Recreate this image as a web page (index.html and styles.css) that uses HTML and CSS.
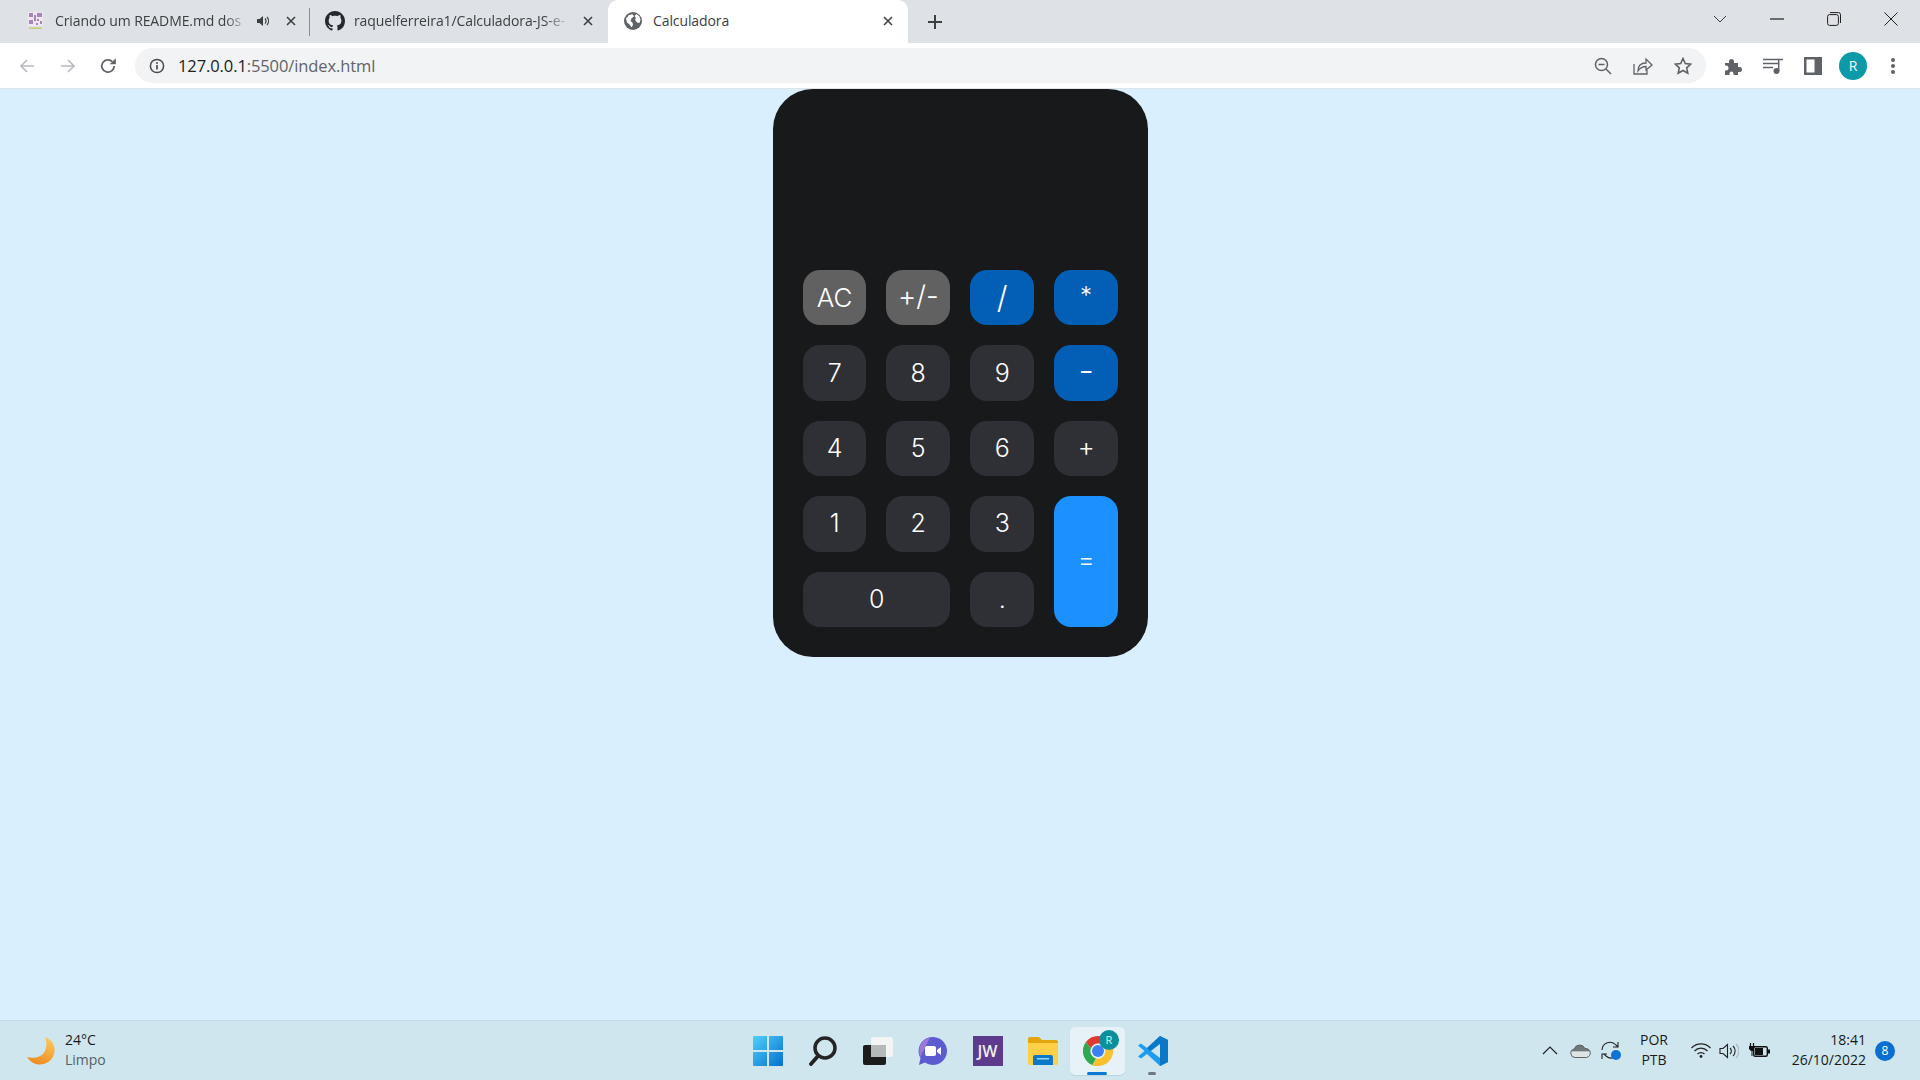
FILE: index.html
```html
<!DOCTYPE html>
<html lang="pt-BR">
<head>
<meta charset="utf-8">
<title>Calculadora</title>
<link rel="stylesheet" href="styles.css">
</head>
<body>
<div class="tabstrip">
  <div class="tab tab-one">
    <svg class="fav" width="17" height="18" viewBox="0 0 17 18"><rect x="1" y="0" width="15" height="14" fill="#efe6f0"/><path d="M2 1h4v4H2zM10 1h5v4h-5zM2 8h4v4H2zM7 3h2v6H7zM10 7h2v2h-2zM13 9h2v3h-2zM9 11h2v2H9z" fill="#a884bd"/><rect x="2" y="15.500" width="13" height="1.500" fill="#c3cf6a"/></svg>
    <span class="title fade">Criando um README.md dos</span>
    <svg class="audio" width="12" height="12" viewBox="0 0 12 12"><path d="M0 4h2.500L6 1v10L2.500 8H0z" fill="#3c4043"/><path d="M8 3.500a3.500 3.500 0 0 1 0 5M10 2a6 6 0 0 1 0 8" fill="none" stroke="#3c4043" stroke-width="1.200"/></svg>
    <svg class="close" width="10" height="10" viewBox="0 0 10 10"><path d="M1 1l8 8M9 1l-8 8" stroke="#3c4043" stroke-width="1.600"/></svg>
  </div>
  <i class="tabsep"></i>
  <div class="tab tab-two">
    <svg class="fav" width="20" height="20" viewBox="0 0 16 16"><path fill="#24292f" d="M8 0C3.58 0 0 3.58 0 8c0 3.54 2.29 6.53 5.47 7.59.4.07.55-.17.55-.38 0-.19-.01-.82-.01-1.49-2.01.37-2.53-.49-2.69-.94-.09-.23-.48-.94-.82-1.13-.28-.15-.68-.52-.01-.53.63-.01 1.08.58 1.23.82.72 1.21 1.87.87 2.33.66.07-.52.28-.87.51-1.07-1.78-.2-3.64-.89-3.64-3.95 0-.87.31-1.59.82-2.15-.08-.2-.36-1.02.08-2.12 0 0 .67-.21 2.2.82.64-.18 1.32-.27 2-.27.68 0 1.36.09 2 .27 1.53-1.04 2.2-.82 2.2-.82.44 1.1.16 1.92.08 2.12.51.56.82 1.27.82 2.15 0 3.07-1.87 3.75-3.65 3.95.29.25.54.73.54 1.48 0 1.07-.01 1.93-.01 2.2 0 .21.15.46.55.38A8.013 8.013 0 0016 8c0-4.42-3.58-8-8-8z"/></svg>
    <span class="title fade">raquelferreira1/Calculadora-JS-e-</span>
    <svg class="close" width="10" height="10" viewBox="0 0 10 10"><path d="M1 1l8 8M9 1l-8 8" stroke="#3c4043" stroke-width="1.600"/></svg>
  </div>
  <div class="tab tab-active">
    <svg class="fav" width="18" height="18" viewBox="0 0 18 18"><circle cx="9" cy="9" r="9" fill="#5f6368"/><path d="M2 6.500l3-3.500 3.500-.8 1.500 2-2.500 2.300-1 2.500 2 1.500.5 2.500-1.500 2.300-2-2.800-2.500-2zM12.500 2l3 2.500 1 3.500-1 3-2.500-.5-2-2.500 1-2-1.500-2z" fill="#fff"/></svg>
    <span class="title">Calculadora</span>
    <svg class="close" width="10" height="10" viewBox="0 0 10 10"><path d="M1 1l8 8M9 1l-8 8" stroke="#3c4043" stroke-width="1.600"/></svg>
  </div>
  <svg class="newtab" width="16" height="16" viewBox="0 0 16 16"><path d="M8 1v14M1 8h14" stroke="#3c4043" stroke-width="2"/></svg>
  <div class="winctrls">
    <svg width="14" height="8" viewBox="0 0 14 8"><path d="M1 1l6 6 6-6" fill="none" stroke="#3c4043"/></svg>
    <svg width="14" height="2" viewBox="0 0 14 2"><path d="M0 1h14" stroke="#1f1f1f" stroke-width="1.200"/></svg>
    <svg width="14" height="14" viewBox="0 0 14 14"><rect x=".6" y="2.600" width="10.800" height="10.800" rx="2" fill="none" stroke="#1f1f1f"/><path d="M3 .6h8.500a2 2 0 0 1 2 2V11" fill="none" stroke="#1f1f1f"/></svg>
    <svg width="14" height="14" viewBox="0 0 14 14"><path d="M.5.500l13 13M13.500.500l-13 13" stroke="#1f1f1f"/></svg>
  </div>
</div>

<div class="toolbar">
  <div class="slot nav"><svg width="16" height="16" viewBox="0 0 16 16"><path d="M15 8H2M8 2L2 8l6 6" fill="none" stroke="#b6b9bd" stroke-width="1.600"/></svg></div>
  <div class="slot nav"><svg width="16" height="16" viewBox="0 0 16 16"><path d="M1 8h13M8 2l6 6-6 6" fill="none" stroke="#b6b9bd" stroke-width="1.600"/></svg></div>
  <div class="slot nav"><svg width="18" height="18" viewBox="0 0 16 16"><path d="M13.500 8a5.500 5.500 0 1 1-1.600-3.900" fill="none" stroke="#5f6368" stroke-width="1.600"/><path d="M15 1v5.500H9.500z" fill="#5f6368"/></svg></div>
  <div class="omnibox">
    <svg class="info" width="16" height="16" viewBox="0 0 16 16"><circle cx="8" cy="8" r="6.600" fill="none" stroke="#4a4d51" stroke-width="1.500"/><path d="M8 7v4.500" stroke="#4a4d51" stroke-width="1.700"/><circle cx="8" cy="5" r="1" fill="#4a4d51"/></svg>
    <span class="url"><b>127.0.0.1</b>:5500/index.html</span>
    <div class="slots">
      <div class="slot"><svg width="18" height="18" viewBox="0 0 18 18"><circle cx="7.500" cy="7.500" r="6" fill="none" stroke="#5f6368" stroke-width="1.500"/><path d="M4.500 7.500h6M12 12l5 5" stroke="#5f6368" stroke-width="1.500"/></svg></div>
      <div class="slot"><svg width="20" height="18" viewBox="0 0 20 18"><path d="M1 7v10h13v-4" fill="none" stroke="#5f6368" stroke-width="1.300"/><path d="M5 14c0-6 4-8 8-8V2l6 6-6 5V9.500C9 9.500 7 11 5 14z" fill="none" stroke="#5f6368" stroke-width="1.300"/></svg></div>
      <div class="slot"><svg width="18" height="18" viewBox="0 0 18 18"><path d="M9 1.500l2.300 5 5.400.6-4 3.700 1.100 5.400L9 13.500l-4.800 2.700 1.100-5.400-4-3.700 5.400-.6z" fill="none" stroke="#5f6368" stroke-width="1.600"/></svg></div>
    </div>
  </div>
  <div class="slots tool-slots">
    <div class="slot"><svg width="18" height="18" viewBox="0 0 18 18"><path d="M1 6h4V4.500a2.500 2.500 0 0 1 5 0V6h4v4h1.500a2.500 2.500 0 0 1 0 5H14v3H9.500v-1.500a2 2 0 0 0-4 0V18H1v-4.500h1a2.500 2.500 0 0 0 0-5H1z" fill="#5f6368"/></svg></div>
    <div class="slot"><svg width="20" height="16" viewBox="0 0 20 16"><path d="M0 1.500h15M0 5.500h15M0 9.500h10" stroke="#5f6368" stroke-width="1.500"/><circle cx="13.500" cy="13" r="3" fill="#5f6368"/><path d="M15.700 13V1.500H20" fill="none" stroke="#5f6368" stroke-width="1.500"/></svg></div>
    <div class="slot"><svg width="18" height="18" viewBox="0 0 18 18"><rect width="18" height="18" fill="#5f6368"/><rect x="2.500" y="2.500" width="8" height="13" fill="#fff"/></svg></div>
    <div class="slot"><span class="avatar">R</span></div>
    <div class="slot"><svg width="6" height="18" viewBox="0 0 6 18"><circle cx="3" cy="3" r="2" fill="#5f6368"/><circle cx="3" cy="9" r="2" fill="#5f6368"/><circle cx="3" cy="15" r="2" fill="#5f6368"/></svg></div>
  </div>
</div>

<main class="viewport">
  <div class="calculator">
    <div class="display"></div>
    <button class="key key-gray key-big">AC</button>
    <button class="key key-gray key-big key-sign">+/-</button>
    <button class="key key-op key-slash">/</button>
    <button class="key key-op key-sym key-star">*</button>
    <button class="key">7</button>
    <button class="key">8</button>
    <button class="key">9</button>
    <button class="key key-op key-sym key-minus">-</button>
    <button class="key">4</button>
    <button class="key">5</button>
    <button class="key">6</button>
    <button class="key key-sym">+</button>
    <button class="key">1</button>
    <button class="key">2</button>
    <button class="key">3</button>
    <button class="key key-equal key-sym">=</button>
    <button class="key key-zero">0</button>
    <button class="key">.</button>
  </div>
</main>

<footer class="taskbar">
  <div class="weather">
    <svg width="30" height="30" viewBox="0 0 30 30"><defs><linearGradient id="moon" x1="0.700" y1="0" x2="0.300" y2="1"><stop offset="0" stop-color="#f9c85f"/><stop offset="1" stop-color="#ef8a1d"/></linearGradient></defs><path d="M19 1c8 3 11 10 9 17-2 8-11 12-18 10-4-1-7-4-9-7 8 2 15 0 18-6 2-5 2-9 0-14z" fill="url(#moon)"/></svg>
    <div class="weather-text"><span class="temp">24°C</span><span class="cond">Limpo</span></div>
  </div>
  <div class="apps">
    <div class="app"><svg width="30" height="30" viewBox="0 0 30 30"><defs><linearGradient id="win" x1="0" y1="0" x2="1" y2="1"><stop offset="0" stop-color="#4fd0fb"/><stop offset="1" stop-color="#0670cc"/></linearGradient></defs><path d="M1 0h13v14H0V1a1 1 0 0 1 1-1zM16 0h13a1 1 0 0 1 1 1v13H16zM0 16h14v14H1a1 1 0 0 1-1-1zM16 16h14v13a1 1 0 0 1-1 1H16z" fill="url(#win)"/></svg></div>
    <div class="app"><svg width="28" height="30" viewBox="0 0 28 30"><circle cx="16" cy="12" r="10" fill="none" stroke="#242424" stroke-width="3.500"/><path d="M9 20l-7 8" stroke="#242424" stroke-width="3.800" stroke-linecap="round"/></svg></div>
    <div class="app"><svg width="30" height="28" viewBox="0 0 30 28"><rect x="0" y="8" width="23" height="20" rx="2" fill="#1c1c1c"/><rect x="8" y="0" width="22" height="20" rx="2" fill="#f3f5f5"/><rect x="8" y="8" width="15" height="12" fill="#b5b9ba"/></svg></div>
    <div class="app"><svg width="30" height="30" viewBox="0 0 30 30"><path d="M15 1a14 14 0 1 1-8 25.500L1 29l1.500-7A14 14 0 0 1 15 1z" fill="#5d5bd0"/><path d="M15 1A14 14 0 0 0 2.500 21L12 1.500z" fill="#9a78d8"/><rect x="7" y="10" width="11" height="10" rx="2" fill="#fff"/><path d="M19 14l4-3v8l-4-3z" fill="#fff"/></svg></div>
    <div class="app"><span class="jw">JW</span></div>
    <div class="app"><svg width="30" height="28" viewBox="0 0 30 28"><path d="M0 2a2 2 0 0 1 2-2h9l3 3h14a2 2 0 0 1 2 2v5H0z" fill="#e3a60e"/><path d="M0 6h11l3-0h16v20a2 2 0 0 1-2 2H2a2 2 0 0 1-2-2z" fill="#fdd045"/><path d="M5 28v-8a2 2 0 0 1 2-2h16a2 2 0 0 1 2 2v8z" fill="#0b78c9"/><rect x="9" y="21" width="12" height="1.500" fill="#9fd4f3"/></svg></div>
    <div class="app app-active">
      <svg width="30" height="30" viewBox="0 0 30 30"><path d="M15 0a15 15 0 0 1 13 7.500H15a7.500 7.500 0 0 0-7 4.800L2.900 6A15 15 0 0 1 15 0z" fill="#e0392f"/><path d="M2.900 6L8 12.300a7.500 7.500 0 0 0 5 10.200L9.500 29A15 15 0 0 1 2.900 6z" fill="#2fa84f"/><path d="M28 7.500A15 15 0 0 1 15 30h-5.500L13 22.500A7.500 7.500 0 0 0 21 11z" fill="#fbc02d"/><circle cx="15" cy="15" r="6" fill="#3d80ef"/></svg>
      <span class="profile">R</span>
      <i class="running"></i>
    </div>
    <div class="app app-open"><svg width="30" height="30" viewBox="0 0 30 30"><path d="M22 0l8 4v22l-8 4-13-12-6 4.500-3-2 6.500-5.500L0 9.500l3-2L9 12z" fill="#1f9cf0"/><path d="M22 0l8 4v22l-8 4V8L12 15 9 12z" fill="#0a78c7"/><path d="M22 8v14l-9-7z" fill="#cfe6ee"/></svg><i class="running-dot"></i></div>
  </div>
  <div class="tray">
    <svg class="t-chev" width="16" height="9" viewBox="0 0 16 9"><path d="M1 8l7-7 7 7" fill="none" stroke="#222" stroke-width="1.200"/></svg>
    <svg class="t-cloud" width="21" height="14" viewBox="0 0 21 14"><defs><linearGradient id="cloud" x1="0" y1="0" x2="0" y2="1"><stop offset="0.450" stop-color="#6f7779"/><stop offset="0.550" stop-color="#dfe4e4"/></linearGradient></defs><path d="M5 13.500a4.300 4.300 0 0 1-.8-8.500A5.800 5.800 0 0 1 15 4.500a4.500 4.500 0 0 1 1.500 9z" fill="url(#cloud)" stroke="#5d6466" stroke-width="1"/></svg>
    <svg class="t-sync" width="20" height="20" viewBox="0 0 20 20"><path d="M1 9a8 8 0 0 1 14-5l2 2M14 16a8 8 0 0 1-9-1l-2-2" fill="none" stroke="#222" stroke-width="1.100"/><path d="M17 1v5h-5M1 18v-5h5" fill="none" stroke="#222" stroke-width="1.100"/><circle cx="15" cy="14" r="5" fill="#0f73d6"/></svg>
    <div class="lang"><span>POR</span><span>PTB</span></div>
    <svg class="t-wifi" width="20" height="15" viewBox="0 0 20 15"><path d="M.5 5a13 13 0 0 1 19 0M3.500 8a9 9 0 0 1 13 0M6.500 11a5 5 0 0 1 7 0" fill="none" stroke="#222" stroke-width="1.200"/><circle cx="10" cy="13.500" r="1.400" fill="#222"/></svg>
    <svg class="t-vol" width="20" height="16" viewBox="0 0 20 16"><path d="M1 5.500h3l4.500-4v13l-4.500-4H1z" fill="none" stroke="#222" stroke-width="1.100"/><path d="M11 5a4 4 0 0 1 0 6" fill="none" stroke="#222" stroke-width="1.100"/><path d="M14 3a7 7 0 0 1 0 10" fill="none" stroke="#222" stroke-width="1.100"/><path d="M17 1a10 10 0 0 1 0 14" fill="none" stroke="#a9b8bc" stroke-width="1.100"/></svg>
    <svg class="t-bat" width="21" height="15" viewBox="0 0 21 15"><path d="M1.500 0v3M4.500 0v3" stroke="#111" stroke-width="1.200"/><path d="M0 3h6v3L4 8H2L0 6zM2.500 8h1v5h-1z" fill="#111"/><rect x="4.700" y="3.700" width="13.600" height="9.600" rx="1.500" fill="#cfe6ee" stroke="#111" stroke-width="1.400"/><rect x="6" y="5" width="8" height="7" fill="#111"/><rect x="19" y="6.500" width="2" height="4" fill="#111"/></svg>
    <div class="clock"><span>18:41</span><span>26/10/2022</span></div>
    <span class="notif">8</span>
  </div>
</footer>
</body>
</html>
```
FILE: styles.css
```css
* { box-sizing: border-box; }
html, body { height: 100%; }
body {
  margin: 0;
  display: flex;
  flex-direction: column;
  height: 100vh;
  overflow: hidden;
  background: #d9effe;
  font-family: "Open Sans", "Noto Sans", sans-serif;
}

/* tab strip */
.tabstrip {
  display: flex;
  align-items: stretch;
  height: 43px;
  background: #dee1e6;
  color: #3c4043;
  font-size: 14px;
  letter-spacing: -0.100px;
}
.tab {
  display: flex;
  align-items: center;
  flex: none;
  padding-bottom: 2px;
}
.tab .title { flex: 1; white-space: nowrap; overflow: hidden; }
.fade {
  -webkit-mask-image: linear-gradient(to right, #000 88%, transparent);
  mask-image: linear-gradient(to right, #000 88%, transparent);
}
.tab-one { width: 309px; padding-left: 27px; padding-right: 13px; }
.tab-one .fav { margin-right: 11px; }
.tab-one .title { margin-right: 9px; }
.tab-one .audio { margin-right: 17px; }
.tabsep { flex: none; width: 1px; height: 28px; margin-top: 8px; background: #8a8d91; }
.tab-two { width: 298px; padding-left: 15px; padding-right: 15px; }
.tab-two .fav { margin-right: 9px; }
.tab-two .title { margin-right: 13px; }
.tab-active {
  width: 300px;
  padding-left: 16px;
  padding-right: 15px;
  background: #fff;
  border-radius: 10px 10px 0 0;
}
.tab-active .fav { margin-right: 11px; }
.newtab { align-self: center; margin-left: 19px; flex: none; }
.winctrls {
  margin-left: auto;
  display: flex;
  align-items: center;
  gap: 43px;
  padding: 0 22px 6px 0;
}

/* toolbar */
.toolbar {
  display: flex;
  align-items: center;
  height: 46px;
  padding: 0 7px 0 7px;
  background: #fff;
  border-bottom: 1px solid #dfe4e8;
}
.slot {
  flex: none;
  width: 40px;
  display: flex;
  justify-content: center;
  align-items: center;
}
.nav { width: 40.500px; }
.omnibox {
  flex: 1;
  margin-left: 6.500px;
  height: 35px;
  display: flex;
  align-items: center;
  padding: 0 3px 0 14px;
  background: #f1f3f4;
  border-radius: 18px;
}
.url {
  margin-left: 13px;
  font-size: 16.500px;
  letter-spacing: -0.100px;
  color: #5f6368;
}
.url b { font-weight: 400; color: #202124; }
.slots { display: flex; align-items: center; }
.omnibox .slots { margin-left: auto; }
.tool-slots { flex: none; margin-left: 7px; }
.avatar {
  flex: none;
  width: 28px;
  height: 28px;
  border-radius: 50%;
  background: #0c9aa8;
  color: #fff;
  font-size: 14px;
  display: flex;
  align-items: center;
  justify-content: center;
}

/* page */
.viewport {
  flex: 1;
  min-height: 0;
  display: flex;
  justify-content: center;
  align-items: flex-start;
  padding-left: 1px;
}
.calculator {
  width: 375px;
  height: 568px;
  padding: 29px 30px 30px;
  display: grid;
  grid-template-columns: 63.250px 64px 64px 63.750px;
  grid-template-rows: 132px repeat(5, 1fr);
  gap: 20px;
  background: #18191b;
  border-radius: 40px;
}
.display { grid-column: 1 / -1; }
.key {
  border: 0;
  padding: 0;
  background: #2f3036;
  color: #fff;
  border-radius: 17px;
  font-family: Inter, "Noto Sans", sans-serif;
  font-weight: 300;
  font-size: 25px;
  line-height: 1;
}
.key-gray { background: #616161; }
.key-big { font-size: 26px; }
.key-sign { font-size: 28px; padding-bottom: 4px; }
.key-op { background: #025fb5; }
.key-slash { font-size: 31px; }
.key-sym { font-size: 26px; padding-bottom: 3px; }
.key-star { padding-bottom: 4px; font-size: 24px; }
.key-minus { font-size: 34px; padding-bottom: 5px; }
.key-equal { grid-row: span 2; background: #1a91ff; }
.key-zero { grid-column: span 2; }

/* taskbar */
.taskbar {
  flex: none;
  height: 60px;
  display: grid;
  grid-template-columns: 1fr auto 1fr;
  align-items: center;
  background: #cfe6ee;
  border-top: 1px solid #c2dbe4;
  color: #1a1a1a;
  font-family: "Open Sans", "Noto Sans", sans-serif;
  font-size: 14px;
  letter-spacing: 0;
}
.weather {
  display: flex;
  align-items: center;
  padding-left: 26px;
  gap: 9px;
}
.weather-text { display: flex; flex-direction: column; line-height: 20px; margin-top: -1px; }
.temp { color: #1a1a1a; }
.cond { color: #555f64; }
.apps { display: flex; align-items: center; }
.app {
  position: relative;
  width: 55px;
  height: 48px;
  display: flex;
  align-items: center;
  justify-content: center;
  border-radius: 5px;
}
.app-active { background: #e6f2f7; box-shadow: 0 1px 1px #bcd4dd; }
.jw {
  width: 30px;
  height: 30px;
  background: #5c3a8c;
  color: #eee;
  font-size: 16px;
  font-weight: 600;
  display: flex;
  align-items: center;
  justify-content: center;
}
.profile {
  position: absolute;
  right: 6px;
  top: 3px;
  width: 20px;
  height: 20px;
  border-radius: 50%;
  background: #0c8f9c;
  color: #cfe;
  font-size: 11px;
  display: flex;
  align-items: center;
  justify-content: center;
}
.running {
  position: absolute;
  left: 17px;
  bottom: 0;
  width: 20px;
  height: 3px;
  border-radius: 2px;
  background: #0a78d4;
}
.running-dot {
  position: absolute;
  left: 23px;
  bottom: 0;
  width: 8px;
  height: 3px;
  border-radius: 2px;
  background: #6f7a80;
}
.tray {
  display: flex;
  align-items: center;
  justify-content: flex-end;
  padding-right: 25px;
}
.tray svg { flex: none; }
.t-cloud { margin-left: 12px; }
.t-sync { margin-left: 10px; }
.lang {
  width: 50px;
  margin-left: 8px;
  margin-top: -1px;
  display: flex;
  flex-direction: column;
  align-items: center;
  line-height: 20px;
}
.t-wifi { margin-left: 12px; }
.t-vol { margin-left: 8px; }
.t-bat { margin-left: 10px; }
.clock {
  width: 90px;
  margin-left: 6px;
  margin-top: -1px;
  display: flex;
  flex-direction: column;
  align-items: flex-end;
  line-height: 20px;
}
.notif {
  width: 20px;
  height: 20px;
  margin-left: 9px;
  border-radius: 50%;
  background: #0a6fd0;
  color: #fff;
  font-size: 12px;
  display: flex;
  align-items: center;
  justify-content: center;
}
```
